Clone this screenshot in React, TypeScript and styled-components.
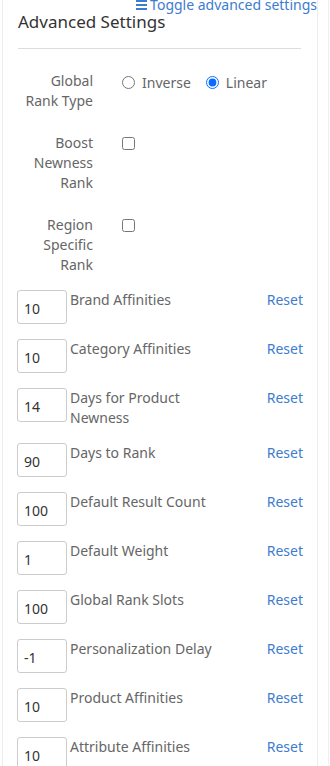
import { FC, JSX } from 'react';
import styled, { createGlobalStyle } from 'styled-components';

const GlobalStyle = createGlobalStyle`
  body {
    margin: 0;
    background: #ffffff;
    font-family: "Noto Sans", "Open Sans", Arial, sans-serif;
  }
`;

const Page = styled.div`
  width: 328px;
  min-height: 766px;
  border-right: 1px solid #f0f0f0;
  overflow: hidden;
`;

const Panel = styled.section`
  margin: -2px 0 0 2px;
  width: 316px;
  box-sizing: border-box;
  border-left: 1px solid #ececec;
  border-right: 1px solid #ececec;
  padding: 0 0 0 15px;
`;

const ToggleRow = styled.div`
  display: flex;
  justify-content: flex-end;
`;

const ToggleLink = styled.a`
  display: flex;
  align-items: center;
  gap: 2px;
  font-size: 14px;
  line-height: 14px;
  color: #3d7cd0;
  text-decoration: none;
  cursor: pointer;
`;

const Heading = styled.h3`
  margin: 0;
  font-size: 17px;
  font-weight: 400;
  line-height: 20px;
  color: #333333;
`;

const Divider = styled.hr`
  margin: 16px 16px 22px 0;
  border: 0;
  border-top: 1px solid #dddddd;
`;

const FieldRow = styled.div<{ $gap?: number }>`
  display: grid;
  grid-template-columns: 75px 1fr;
  column-gap: 29px;
  margin-bottom: ${p => p.$gap ?? 22}px;
`;

const FieldLabel = styled.div`
  text-align: right;
  font-size: 14px;
  line-height: 20px;
  color: #666666;
`;

const Options = styled.div`
  display: flex;
  align-items: center;
  height: 22px;
  font-size: 14px;
  color: #666666;
`;

const Option = styled.label`
  display: flex;
  align-items: center;
  gap: 7px;
  margin-right: 15px;
`;

const Radio = styled.input`
  margin: 0;
  width: 13px;
  height: 13px;
  accent-color: #0a6cff;
`;

const Check = styled.input`
  margin: 4px 0 0;
  width: 13px;
  height: 13px;
`;

const NumberRow = styled.div`
  display: flex;
  align-items: flex-start;
  margin-bottom: 15px;
  padding-right: 14px;
`;

const NumberInput = styled.input`
  flex: 0 0 50px;
  width: 50px;
  height: 34px;
  box-sizing: border-box;
  margin: 0 0 0 -1px;
  padding: 2px 0 0 6px;
  border: 1px solid #cccccc;
  border-radius: 3px;
  font-family: inherit;
  font-size: 14px;
  color: #333333;
  background: #ffffff;
`;

const NumberLabel = styled.div`
  flex: 0 0 160px;
  margin-left: 3px;
  font-size: 14px;
  line-height: 20px;
  color: #666666;
`;

const ResetLink = styled.a`
  margin-left: auto;
  font-size: 14px;
  line-height: 20px;
  color: #3d7cd0;
  cursor: pointer;
`;

const BarsIcon: FC = () => (
  <svg width="12" height="12" viewBox="0 0 12 12" fill="#3d7cd0">
    <rect x="0" y="1" width="11" height="2" />
    <rect x="0" y="5" width="11" height="2" />
    <rect x="0" y="9" width="11" height="2" />
  </svg>
);

const settings: [string, string][] = [
  ['10', 'Brand Affinities'],
  ['10', 'Category Affinities'],
  ['14', 'Days for Product Newness'],
  ['90', 'Days to Rank'],
  ['100', 'Default Result Count'],
  ['1', 'Default Weight'],
  ['100', 'Global Rank Slots'],
  ['-1', 'Personalization Delay'],
  ['10', 'Product Affinities'],
  ['10', 'Attribute Affinities'],
];

const App: FC = (): JSX.Element => {
  return (
    <Page>
      <GlobalStyle />
      <Panel>
        <ToggleRow>
          <ToggleLink>
            <BarsIcon />
            Toggle advanced settings
          </ToggleLink>
        </ToggleRow>
        <Heading>Advanced Settings</Heading>
        <Divider />

        <FieldRow>
          <FieldLabel>Global Rank Type</FieldLabel>
          <Options>
            <Option>
              <Radio type={'radio'} name={'rankType'} />
              Inverse
            </Option>
            <Option>
              <Radio type={'radio'} name={'rankType'} defaultChecked />
              Linear
            </Option>
          </Options>
        </FieldRow>

        <FieldRow>
          <FieldLabel>Boost Newness Rank</FieldLabel>
          <div><Check type={'checkbox'} /></div>
        </FieldRow>

        <FieldRow $gap={15}>
          <FieldLabel>Region Specific Rank</FieldLabel>
          <div><Check type={'checkbox'} /></div>
        </FieldRow>

        {settings.map(([value, label]) => (
          <NumberRow key={label}>
            <NumberInput type={'text'} defaultValue={value} />
            <NumberLabel>{label}</NumberLabel>
            <ResetLink>Reset</ResetLink>
          </NumberRow>
        ))}
      </Panel>
    </Page>
  );
};

export default App;
